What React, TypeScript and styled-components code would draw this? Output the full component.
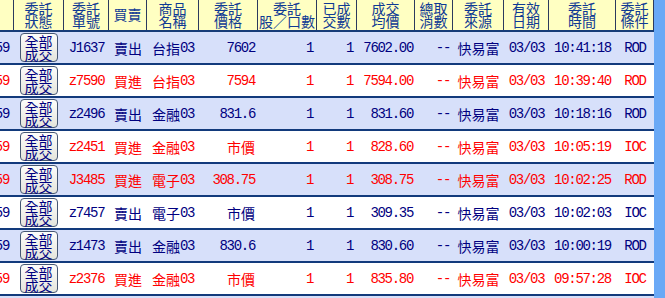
import styled, { createGlobalStyle } from 'styled-components';

const GlobalStyle = createGlobalStyle`
  html, body {
    margin: 0;
    padding: 0;
    background: #6aa9f6;
  }
`;

const COLS = '14px 50px 45px 38px 52px 59px 59px 40px 58px 38px 51px 45px 67px 38px';

const ScTable = styled.div`
  width: 654px;
  height: 298px;
  overflow: hidden;
  background: #ffffff;
`;

const ScHeadRow = styled.div`
  display: grid;
  grid-template-columns: ${COLS};
  height: 30px;
  background: #ffffc2;
  border-bottom: 2px solid #173c78;
`;

const ScHeadCell = styled.div`
  display: flex;
  flex-direction: column;
  align-items: center;
  justify-content: center;
  border-right: 1px solid #2c3a5e;
  color: #0f3a94;
  font-family: 'Noto Sans CJK TC', sans-serif;
  font-size: 14px;
  line-height: 13.5px;
  white-space: nowrap;
`;

const ScRow = styled.div<{ $alt: boolean }>`
  display: grid;
  grid-template-columns: ${COLS};
  height: 31px;
  background: ${(p) => (p.$alt ? '#d7e0fa' : '#ffffff')};
  border-bottom: 2px solid #123a7c;
`;

const ScCell = styled.div<{ $align: 'center' | 'right'; $pad: number; $buy: boolean }>`
  display: flex;
  align-items: center;
  justify-content: ${(p) => (p.$align === 'right' ? 'flex-end' : 'center')};
  padding-right: ${(p) => p.$pad}px;
  overflow: hidden;
  white-space: nowrap;
  color: ${(p) => (p.$buy ? '#ff0000' : '#000080')};
  font-family: 'Noto Sans CJK TC', sans-serif;
  font-size: 14px;
  line-height: 16px;
`;

// half-width latin runs, narrow like the old bitmap font
const ScLatin = styled.span`
  font-family: 'Liberation Mono', monospace;
  font-size: 14px;
  letter-spacing: -1.3px;
`;

const ScButton = styled.button`
  width: 38px;
  height: 29px;
  padding: 0;
  border: 1px solid #465773;
  border-radius: 4px;
  background: linear-gradient(#fdfdfb, #e4e4dc);
  color: #000080;
  font-family: 'Noto Sans CJK TC', sans-serif;
  font-size: 14px;
  line-height: 13px;
  display: flex;
  flex-direction: column;
  align-items: center;
  justify-content: center;
`;

const headers: [string, string][] = [
  ['', ''],
  ['委託', '狀態'],
  ['委託', '單號'],
  ['買賣', ''],
  ['商品', '名稱'],
  ['委託', '價格'],
  ['委託', '股／口數'],
  ['已成', '交數'],
  ['成交', '均價'],
  ['總取', '消數'],
  ['委託', '來源'],
  ['有效', '日期'],
  ['委託', '時間'],
  ['委託', '條件'],
];

// alignment and right padding for each data column
const layout: { align: 'center' | 'right'; pad: number }[] = [
  { align: 'right', pad: 5 },
  { align: 'center', pad: 1 },
  { align: 'center', pad: 0 },
  { align: 'center', pad: 0 },
  { align: 'center', pad: 0 },
  { align: 'right', pad: 3 },
  { align: 'right', pad: 4 },
  { align: 'right', pad: 4 },
  { align: 'right', pad: 2 },
  { align: 'right', pad: 3 },
  { align: 'center', pad: 0 },
  { align: 'center', pad: 0 },
  { align: 'center', pad: 0 },
  { align: 'center', pad: 0 },
];

// split text into CJK and latin runs
const Mixed = ({ text }: { text: string }) => {
  const runs = text.match(/[\x00-\x7f]+|[^\x00-\x7f]+/g) ?? [];
  return (
    <>
      {runs.map((r, i) => (/^[\x00-\x7f]/.test(r) ? <ScLatin key={i}>{r}</ScLatin> : <span key={i}>{r}</span>))}
    </>
  );
};

type Order = {
  id: string;
  side: '買進' | '賣出';
  product: string;
  price: string;
  avg: string;
  time: string;
  cond: string;
};

const orders: Order[] = [
  { id: 'J1637', side: '賣出', product: '台指03', price: '7602', avg: '7602.00', time: '10:41:18', cond: 'ROD' },
  { id: 'z7590', side: '買進', product: '台指03', price: '7594', avg: '7594.00', time: '10:39:40', cond: 'ROD' },
  { id: 'z2496', side: '賣出', product: '金融03', price: '831.6', avg: '831.60', time: '10:18:16', cond: 'ROD' },
  { id: 'z2451', side: '買進', product: '金融03', price: '市價', avg: '828.60', time: '10:05:19', cond: 'IOC' },
  { id: 'J3485', side: '買進', product: '電子03', price: '308.75', avg: '308.75', time: '10:02:25', cond: 'ROD' },
  { id: 'z7457', side: '賣出', product: '電子03', price: '市價', avg: '309.35', time: '10:02:03', cond: 'IOC' },
  { id: 'z1473', side: '賣出', product: '金融03', price: '830.6', avg: '830.60', time: '10:00:19', cond: 'ROD' },
  { id: 'z2376', side: '買進', product: '金融03', price: '市價', avg: '835.80', time: '09:57:28', cond: 'IOC' },
];

export default function App() {
  return (
    <>
      <GlobalStyle />
      <ScTable>
        <ScHeadRow>
          {headers.map(([a, b], i) => (
            <ScHeadCell key={i}>
              <span>{a}</span>
              {b && <span>{b}</span>}
            </ScHeadCell>
          ))}
        </ScHeadRow>
        {orders.map((o, r) => {
          const buy = o.side === '買進';
          const values: React.ReactNode[] = [
            <Mixed key="a" text="59" />,
            <ScButton key="btn">
              <span>全部</span>
              <span>成交</span>
            </ScButton>,
            ...[o.id, o.side, o.product, o.price, '1', '1', o.avg, '--', '快易富', '03/03', o.time, o.cond].map(
              (t, k) => <Mixed key={k} text={t} />,
            ),
          ];
          return (
            <ScRow key={o.id} $alt={r % 2 === 0}>
              {values.map((v, i) => (
                <ScCell key={i} $align={layout[i].align} $pad={layout[i].pad} $buy={buy}>
                  {v}
                </ScCell>
              ))}
            </ScRow>
          );
        })}
        <ScRow $alt />
      </ScTable>
    </>
  );
}
